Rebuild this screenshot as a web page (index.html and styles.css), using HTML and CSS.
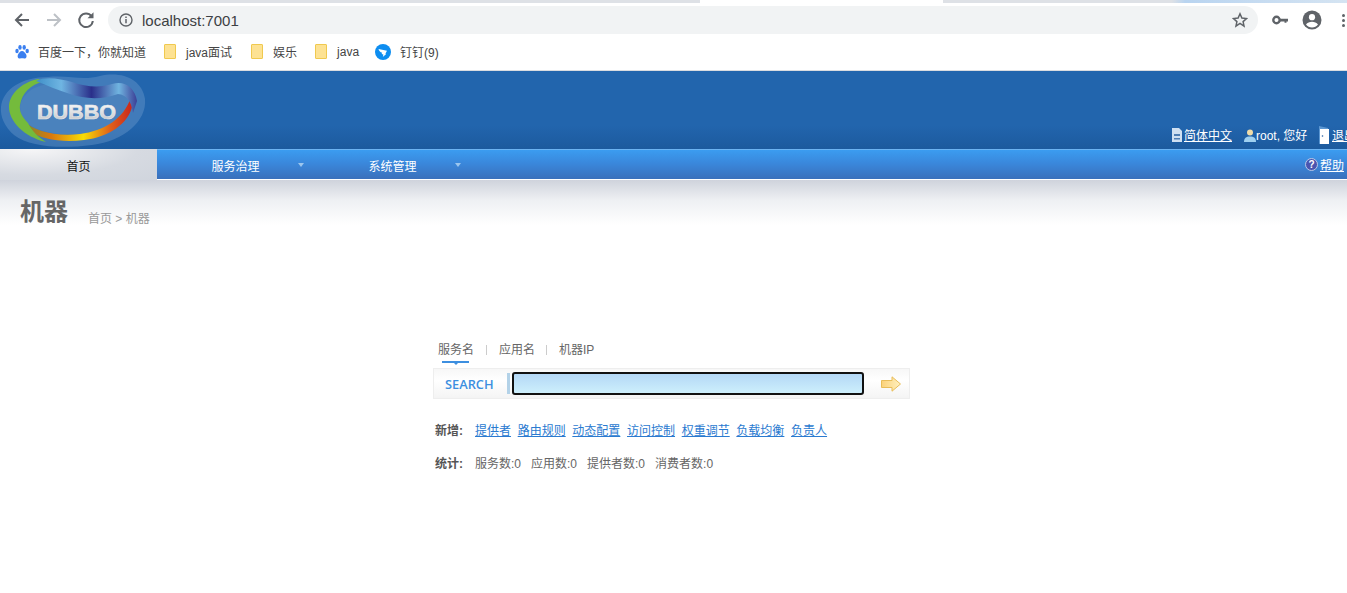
FILE: index.html
```html
<!DOCTYPE html>
<html lang="en">
<head>
    <meta charset="UTF-8">
    <meta name="viewport" content="width=device-width, initial-scale=1.0">
    <title>dubbo</title>
    <link rel="stylesheet" href="styles.css">
</head>
<body>
    <!-- browser chrome -->
    <div class="tab-strip"></div>
    <div class="toolbar">
        <svg class="tool-icon" width="18" height="18" viewBox="0 0 18 18"><path d="M16 9H3M9 3L3 9l6 6" fill="none" stroke="#5f6368" stroke-width="2"/></svg>
        <svg class="tool-icon" width="18" height="18" viewBox="0 0 18 18"><path d="M2 9h13M9 3l6 6-6 6" fill="none" stroke="#bdc1c6" stroke-width="2"/></svg>
        <svg class="tool-icon" width="18" height="18" viewBox="0 0 18 18"><path d="M14.5 5.2A6.8 6.8 0 1 0 15.8 10" fill="none" stroke="#5f6368" stroke-width="2"/><path d="M10.5 7.2h6v-6z" fill="#5f6368"/></svg>
        <div class="omnibox">
            <svg width="14" height="14" viewBox="0 0 14 14"><circle cx="7" cy="7" r="6" fill="none" stroke="#5f6368" stroke-width="1.4"/><path d="M7 6v4.2M7 3.6v1.4" stroke="#5f6368" stroke-width="1.5"/></svg>
            <span class="url">localhost:7001</span>
            <svg class="star" width="16" height="16" viewBox="0 0 16 16"><path d="M8 1.8l1.9 4.2 4.6.5-3.4 3.1.9 4.5L8 11.3l-4 2.8.9-4.5L1.500 6.500l4.600-.5z" fill="none" stroke="#5f6368" stroke-width="1.500"/></svg>
        </div>
        <svg class="key" width="16" height="10" viewBox="0 0 16 10"><circle cx="4.500" cy="5" r="3.200" fill="none" stroke="#5f6368" stroke-width="2.400"/><path d="M8 3.800h8v2.600h-1.500v1.400h-2V6.400H8z" fill="#5f6368"/></svg>
        <svg class="avatar" width="20" height="20" viewBox="0 0 20 20"><circle cx="10" cy="10" r="9.500" fill="#5f6368"/><circle cx="10" cy="7.200" r="3.100" fill="#fff"/><path d="M4 14.600c1.300-2 3.700-2.900 6-2.900s4.700.9 6 2.900a7.500 7.500 0 0 1-12 0z" fill="#fff"/></svg>
        <div class="dots"><i></i><i></i><i></i></div>
    </div>
    <div class="bookmarks">
        <div class="mark mark-first">
            <svg width="16" height="16" viewBox="0 0 16 16" fill="#3a7ff0"><ellipse cx="3" cy="7" rx="1.700" ry="2.200"/><ellipse cx="6" cy="3.400" rx="1.700" ry="2.300"/><ellipse cx="10.200" cy="3.400" rx="1.700" ry="2.300"/><ellipse cx="13.200" cy="7" rx="1.700" ry="2.200"/><path d="M8 7c-2 0-3 2-4 3.500C3 12.500 4 15 6 14.500c1.300-.3 2.800-.3 4.200 0 2 .4 3-2 2-4C11.200 9 10 7 8 7z"/></svg>
            <span>百度一下，你就知道</span>
        </div>
        <div class="mark mark-java-q"><i class="folder"></i><span>java面试</span></div>
        <div class="mark mark-fun"><i class="folder"></i><span>娱乐</span></div>
        <div class="mark mark-java"><i class="folder"></i><span>java</span></div>
        <div class="mark mark-ding">
            <svg width="16" height="16" viewBox="0 0 16 16"><circle cx="8" cy="8" r="8" fill="#0d8df0"/><path d="M3.500 5l8.500 1.700-1.600 3 .8.200-3.400 3 .6-2.400-1.800-.5.600-1.300C5 8.200 4 6.800 3.500 5z" fill="#fff"/></svg>
            <span>钉钉(9)</span>
        </div>
    </div>

    <!-- page header -->
    <div class="header">
        <svg class="logo" width="148" height="78" viewBox="0 0 148 78">
            <defs>
                <linearGradient id="ring" x1="0" x2="1" y1="0" y2="0">
                    <stop offset="0" stop-color="#7a8a30"/>
                    <stop offset="0.25" stop-color="#d9780f"/>
                    <stop offset="0.55" stop-color="#f7dd05"/>
                    <stop offset="0.8" stop-color="#e0601a"/>
                    <stop offset="1" stop-color="#c9261c"/>
                </linearGradient>
                <linearGradient id="ribbon" x1="0" x2="1" y1="0" y2="0">
                    <stop offset="0" stop-color="#3f8fc8"/>
                    <stop offset="0.25" stop-color="#6fb5e2"/>
                    <stop offset="0.55" stop-color="#2a2f8a"/>
                    <stop offset="0.82" stop-color="#70b4e0"/>
                    <stop offset="1" stop-color="#3b3f96"/>
                </linearGradient>
                <linearGradient id="word" x1="0" x2="0" y1="0" y2="1">
                    <stop offset="0" stop-color="#fff"/>
                    <stop offset="1" stop-color="#c0c2c6"/>
                </linearGradient>
            </defs>
            <path d="M1 36C3 18 22 6 48 6c22-2 34 4 52-1 22-5 42 3 45 23 2 22-21 42-53 46-32 4-62 2-78-10C5 56 0 46 1 36z" fill="#7aa6d3" opacity="0.35"/>
            <path d="M20 36C22 22 36 12 56 13c18 1 36 11 56 7 12-2 18 4 18 12-2 16-22 28-50 31-30 2-60-5-60-27z" fill="#4a82bd"/>
            <path d="M24 50c10 10 32 16 56 13 24-3 44-15 51-37l1 10c-4 16-22 30-48 33-22 3-44-1-54-9z" fill="url(#ring)"/>
            <path d="M38 8C20 12 9 24 9 36c0 14 15 30 37 35-8-5-14-11-18-19-6-6-9-12-8-18 2-12 10-20 24-24z" fill="#74bb3c"/>
            <path d="M36 10C46 5 60 8 72 11c14 5 28 6 40 2 12-4 23 3 25 17l-4 12c-2-12-6-18-15-19-16 6-34 5-48 0C58 19 48 15 36 10z" fill="url(#ribbon)"/>
            <text class="logo-word" x="37" y="48" textLength="79" lengthAdjust="spacingAndGlyphs" fill="url(#word)">DUBBO</text>
        </svg>
        <div class="user-bar">
            <svg width="12" height="14" viewBox="0 0 12 14"><path d="M1 0h7l3 3v11H1z" fill="#cfe0f2"/><path d="M3 6h6v2H3zM3 10h6v1.500H3z" fill="#4f7fb5"/></svg>
            <a class="user-link lang" href="#">简体中文</a>
            <svg class="user-icon" width="12" height="14" viewBox="0 0 12 14"><circle cx="6" cy="4.500" r="3" fill="#f0dca8"/><path d="M0 14c0-4 2-5.500 6-5.500s6 1.500 6 5.500z" fill="#9fd0f0"/></svg>
            <span class="user-name">root, 您好</span>
            <svg class="door" width="11" height="18" viewBox="0 0 11 18"><path d="M0 0l9 2v15l-9 1z" fill="#5c97d2"/><path d="M1 3h9v15H1z" fill="#fff"/><circle cx="3.500" cy="10" r="0.800" fill="#245f9f"/></svg>
            <a class="user-link" href="#">退出</a>
        </div>
    </div>

    <!-- nav -->
    <div class="nav">
        <a class="nav-item current" href="#">首页</a>
        <a class="nav-item has-menu" href="#">服务治理</a>
        <a class="nav-item has-menu" href="#">系统管理</a>
        <div class="nav-help">
            <svg width="13" height="13" viewBox="0 0 13 13"><circle cx="6.500" cy="6.500" r="6" fill="#4a55b0" stroke="#b9c8e6"/><text class="help-q" x="6.500" y="10" text-anchor="middle">?</text></svg>
            <a class="user-link" href="#">帮助</a>
        </div>
    </div>

    <div class="title-band">
        <h1>机器</h1>
        <span class="crumbs">首页 &gt; 机器</span>
    </div>

    <!-- search -->
    <div class="search-box">
        <div class="search-tabs">
            <span class="tab tab-on">服务名</span>
            <i class="tab-sep"></i>
            <span class="tab">应用名</span>
            <i class="tab-sep narrow"></i>
            <span class="tab">机器IP</span>
        </div>
        <div class="search-bar">
            <span class="search-label">SEARCH</span>
            <i class="search-grip"></i>
            <div class="search-input"></div>
            <svg class="search-go" width="20" height="16" viewBox="0 0 20 16">
                <defs><linearGradient id="arrow" x1="0" x2="1" y1="0" y2="0"><stop offset="0" stop-color="#fbd27a"/><stop offset="1" stop-color="#fff0c0"/></linearGradient></defs>
                <path d="M0.500 4.500h10.500V0.800L19.500 8 11 15.200v-3.700H0.500z" fill="url(#arrow)" stroke="#e8bd5a"/>
            </svg>
        </div>
        <div class="info-row add-row">
            <b>新增:</b>
            <a href="#">提供者</a>
            <a href="#">路由规则</a>
            <a href="#">动态配置</a>
            <a href="#">访问控制</a>
            <a href="#">权重调节</a>
            <a href="#">负载均衡</a>
            <a href="#">负责人</a>
        </div>
        <div class="info-row stat-row">
            <b>统计:</b>
            <span>服务数:0</span>
            <span>应用数:0</span>
            <span>提供者数:0</span>
            <span>消费者数:0</span>
        </div>
    </div>
</body>
</html>
```

FILE: styles.css
```css
html, body {
    margin: 0;
    height: 593px;
    overflow: hidden;
}
body {
    font-family: "Liberation Sans", "Noto Sans CJK SC", sans-serif;
    font-size: 12px;
    color: #666;
    background-color: #fff;
}
svg {
    display: block;
    flex-shrink: 0;
}

/* browser chrome */
.tab-strip {
    height: 3px;
    background: linear-gradient(90deg, #dee1e6 0%, #dee1e6 52%, #fff 52%, #fff 70%, #dee1e6 70%, #dee1e6 87%, #b9d4f0 88%, #d5e4f2 100%);
}
.toolbar {
    height: 30px;
    padding: 2px 0 0 13px;
    display: flex;
    align-items: center;
}
.tool-icon {
    margin-right: 14px;
}
.omnibox {
    width: 1129px;
    height: 28px;
    flex-shrink: 0;
    margin-left: -1px;
    padding: 0 10px 0 11px;
    display: flex;
    align-items: center;
    background-color: #f1f3f4;
    border-radius: 14px;
}
.url {
    margin-left: 9px;
    font-size: 15px;
    color: #3c4043;
}
.star {
    margin-left: auto;
}
.key {
    margin-left: 14px;
}
.avatar {
    margin-left: 14px;
}
.dots {
    margin-left: 20px;
    display: flex;
    flex-direction: column;
    gap: 2px;
}
.dots i {
    width: 3px;
    height: 3px;
    background-color: #5f6368;
    border-radius: 50%;
}
.bookmarks {
    height: 36px;
    padding-bottom: 2px;
    border-bottom: 1px solid #dadce0;
    display: flex;
    align-items: center;
    color: #444;
    box-sizing: border-box;
}
.mark {
    display: flex;
    align-items: center;
}
.mark-first {
    margin-left: 14px;
    gap: 8px;
}
.mark-java-q {
    margin-left: 18px;
    gap: 10px;
}
.mark-fun {
    margin-left: 19px;
    gap: 10px;
}
.mark-java {
    margin-left: 18px;
    gap: 10px;
}
.mark-ding {
    margin-left: 16px;
    gap: 9px;
}
.folder {
    width: 10px;
    height: 13px;
    background-color: #fde293;
    border: 1px solid #f0c94f;
    border-radius: 1px;
}

/* header */
.header {
    height: 78px;
    background: linear-gradient(180deg, #2265ad 0%, #2265ad 70%, #1c5a9e 100%);
    display: flex;
    align-items: flex-end;
    justify-content: space-between;
    color: #fff;
}
.logo-word {
    font-family: "Liberation Sans", sans-serif;
    font-size: 20px;
    font-weight: bold;
    stroke: #e8e8e8;
    stroke-width: 0.6;
}
.user-bar {
    display: flex;
    align-items: center;
    height: 24px;
    margin-right: -9px;
    padding-bottom: 5px;
    box-sizing: border-box;
}
.user-link {
    color: #fff;
    text-decoration: underline;
}
.lang {
    margin-left: 1px;
}
.user-icon {
    margin-left: 12px;
}
.user-name {
    width: 63px;
}
.door {
    margin-right: 2px;
}

/* nav */
.nav {
    height: 31px;
    display: flex;
    align-items: stretch;
    background: linear-gradient(180deg, #3b9cf0 0%, #3a88dc 45%, #3a70bb 100%);
    border-top: 1px solid #6cb3f2;
    border-bottom: 1px solid #fff;
    box-sizing: border-box;
    color: #fff;
}
.nav-item {
    width: 157px;
    position: relative;
    display: flex;
    align-items: center;
    justify-content: center;
    color: #fff;
    text-decoration: none;
    padding-top: 2px;
    box-sizing: border-box;
}
.nav-item.current {
    color: #111;
    background: radial-gradient(ellipse at 20% 0, #f6f6f7 0%, #d6dae1 60%, #d0d5dd 100%);
    margin: -1px 0 -1px;
}
.has-menu::after {
    content: "";
    position: absolute;
    right: 10px;
    top: 13px;
    border-style: solid;
    border-width: 4px 3px 0;
    border-color: #9cc6ee transparent transparent;
}
.nav-help {
    margin-left: auto;
    padding-right: 3px;
    display: flex;
    align-items: center;
    gap: 2px;
}
.help-q {
    font-family: "Liberation Sans", sans-serif;
    font-size: 10px;
    font-weight: bold;
    fill: #fff;
}

/* title band */
.title-band {
    height: 45px;
    padding-left: 20px;
    display: flex;
    align-items: flex-start;
    background: linear-gradient(180deg, #cfd3dc 0%, #eef0f3 45%, #fff 100%);
    box-sizing: border-box;
}
h1 {
    margin: 12px 0 0;
    font-size: 24px;
    font-weight: bold;
    line-height: 40px;
    color: #666;
}
.crumbs {
    margin: 29px 0 0 20px;
    color: #999;
}

/* search */
.search-box {
    width: 477px;
    margin: 113px 0 0 433px;
}
.search-tabs {
    height: 30px;
    padding: 3px 0 0 5px;
    display: flex;
    align-items: flex-start;
    box-sizing: border-box;
}
.tab {
    position: relative;
    line-height: 18px;
}
.tab-on::after {
    content: "";
    position: absolute;
    left: 4px;
    right: 5px;
    bottom: -4px;
    height: 2px;
    background-color: #3d8fe0;
}
.tab-on::before {
    content: "";
    position: absolute;
    left: 16px;
    bottom: -6px;
    border-style: solid;
    border-width: 2px 2px 0;
    border-color: #3d8fe0 transparent transparent;
}
.tab-sep {
    width: 1px;
    height: 10px;
    margin: 4px 12px 0;
    background-color: #ccc;
}
.tab-sep.narrow {
    margin-left: 11px;
}
.search-bar {
    height: 31px;
    display: flex;
    align-items: center;
    background: linear-gradient(180deg, #f7f7f7 0%, #fff 40%, #f4f4f4 100%);
    border: 1px solid #eee;
    box-sizing: border-box;
}
.search-label {
    margin-left: 11px;
    width: 62px;
    font-family: "Open Sans", sans-serif;
    font-size: 12.8px;
    font-weight: 600;
    color: #3d8fe0;
}
.search-grip {
    width: 3px;
    height: 21px;
    background-color: #b3d2e8;
}
.search-input {
    width: 352px;
    height: 23px;
    margin-left: 2px;
    background: linear-gradient(180deg, #b4d8f6 0%, #cdeffc 100%);
    border: 2px solid #111;
    border-radius: 3px;
    box-sizing: border-box;
}
.search-go {
    margin-left: 17px;
}
.info-row {
    display: flex;
    padding-left: 2px;
    line-height: 18px;
}
.info-row b {
    width: 40px;
    color: #555;
}
.add-row {
    margin-top: 23px;
    gap: 6.67px;
}
.add-row b {
    margin-right: -6.67px;
}
.add-row a {
    color: #2a7ad0;
}
.stat-row {
    margin-top: 15px;
    gap: 10px;
}
.stat-row b {
    margin-right: -10px;
}
```
